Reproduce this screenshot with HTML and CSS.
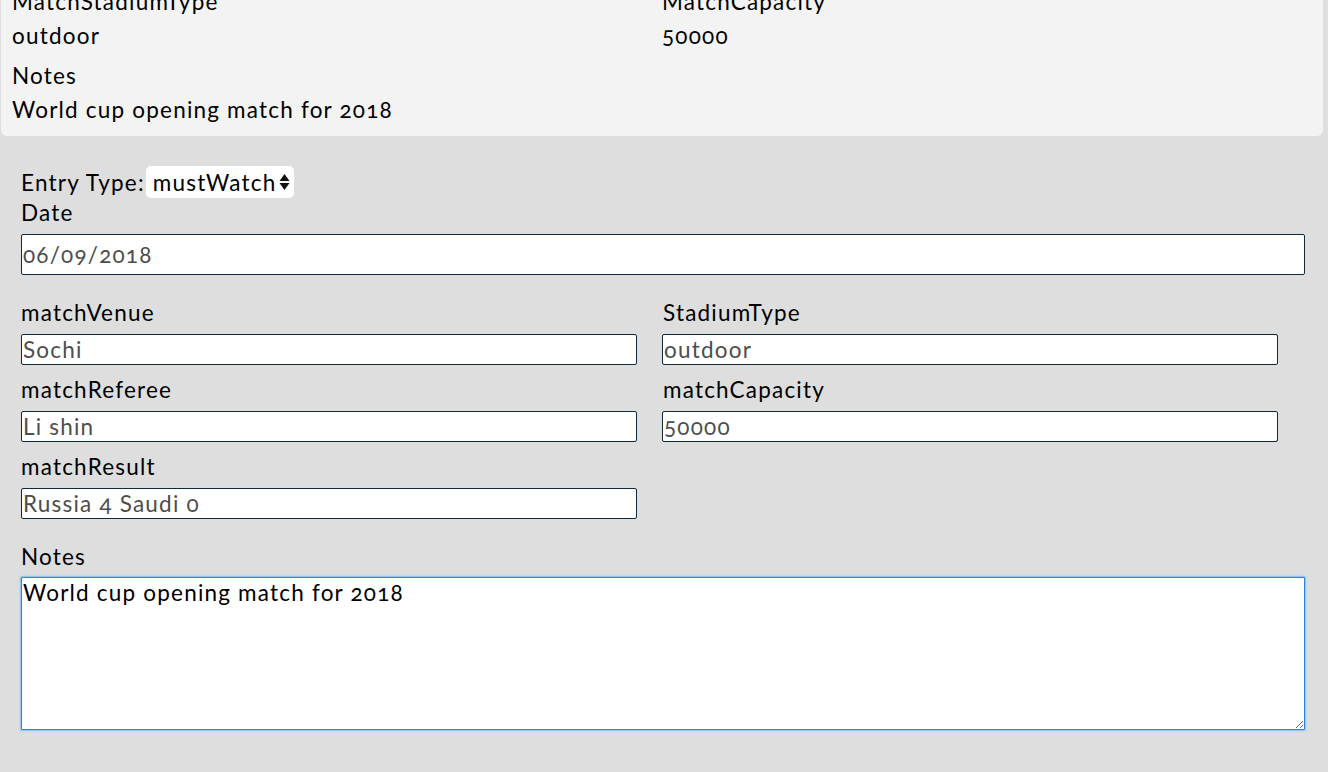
FILE: index.html
```html
<!DOCTYPE html>
<html>
<head>
<meta charset="utf-8">
<link rel="stylesheet" href="styles.css">
</head>
<body>
<div class="summary">
  <div class="summary-grid">
    <div class="item">
      <div class="item-label">MatchStadiumType</div>
      <div class="item-value">outdoor</div>
    </div>
    <div class="item">
      <div class="item-label">MatchCapacity</div>
      <div class="item-value">50000</div>
    </div>
  </div>
  <div class="item">
    <div class="item-label">Notes</div>
    <div class="item-value">World cup opening match for 2018</div>
  </div>
</div>

<form class="entry-form">
  <div class="entry-type">
    <span>Entry Type:</span>
    <span class="select">mustWatch<svg class="arrows" width="11" height="18" viewBox="0 0 11 18"><path d="M5.5 1 L10.5 8 L0.5 8 Z M0.5 10 L10.5 10 L5.5 17 Z" fill="#111"/></svg></span>
  </div>
  <div class="field">
    <label class="label">Date</label>
    <input class="input input-date" type="text" value="06/09/2018">
  </div>
  <div class="two-col">
    <div class="col">
      <div class="field small">
        <label class="label">matchVenue</label>
        <input class="input" type="text" value="Sochi">
      </div>
      <div class="field small">
        <label class="label">matchReferee</label>
        <input class="input" type="text" value="Li shin">
      </div>
      <div class="field small">
        <label class="label">matchResult</label>
        <input class="input" type="text" value="Russia 4 Saudi 0">
      </div>
    </div>
    <div class="col">
      <div class="field small">
        <label class="label">StadiumType</label>
        <input class="input" type="text" value="outdoor">
      </div>
      <div class="field small">
        <label class="label">matchCapacity</label>
        <input class="input" type="text" value="50000">
      </div>
    </div>
  </div>
  <div class="field notes">
    <label class="label">Notes</label>
    <textarea class="textarea">World cup opening match for 2018</textarea>
  </div>
</form>
</body>
</html>
```
FILE: styles.css
```css
* { box-sizing: border-box; }
html, body {
  margin: 0;
  padding: 0;
  background: #dedede;
}
body {
  font-family: Lato, "Open Sans", sans-serif;
  font-size: 22.5px;
  letter-spacing: 1.2px;
  color: #000;
  font-variant-numeric: oldstyle-nums;
  height: 772px;
  overflow: hidden;
}
.summary {
  background: #f3f3f3;
  margin: -21px 5px 0 1px;
  padding: 6px 11px 9px 11px;
  border-radius: 0 0 6px 6px;
}
.summary-grid {
  display: grid;
  grid-template-columns: 1fr 1fr;
}
.item-label, .item-value {
  line-height: 34px;
}
.item { margin-bottom: 6px; }
.item:last-child { margin-bottom: 0; }

.entry-form {
  padding: 30px 23px 0 21px;
}
.entry-type {
  display: flex;
  align-items: center;
  height: 32px;
  margin-bottom: 2px;
}
.select {
  display: inline-flex;
  align-items: center;
  background: #fff;
  border-radius: 5px;
  height: 32px;
  padding: 0 4px 0 7px;
  margin-left: 1px;
  letter-spacing: 1.2px;
}
.arrows { margin-left: 3px; }
.field { display: flex; flex-direction: column; }
.label {
  line-height: 26px;
  margin-bottom: 8px;
}
.input {
  font: inherit;
  letter-spacing: inherit;
  font-variant-numeric: oldstyle-nums;
  color: #4d4d4d;
  background: #fff;
  border: 1px solid #0e2a3c;
  border-radius: 2px;
  padding: 0 1px;
  height: 31px;
  width: 96%;
  margin: 0 0 12px 0;
  outline: none;
}
.col:last-child .input { margin-left: -1px; }
.input-date {
  width: 100%;
  height: 41px;
  margin-bottom: 25px;
}
.two-col {
  display: grid;
  grid-template-columns: 1fr 1fr;
}
.col .field:last-child .input { margin-bottom: 25px; }
.col:last-child .field:last-child .input { margin-bottom: 12px; }
.notes .label { margin-bottom: 7px; }
.textarea {
  display: block;
  font: inherit;
  letter-spacing: inherit;
  font-variant-numeric: oldstyle-nums;
  color: #000;
  width: 100%;
  height: 153px;
  border: 1px solid #3b7fce;
  box-shadow: 0 0 0 1px #9cc1ea, 0 0 2px 2px #c7dbf2;
  border-radius: 1px;
  padding: 2px 1px;
  resize: both;
  outline: none;
  line-height: 26px;
}
```
